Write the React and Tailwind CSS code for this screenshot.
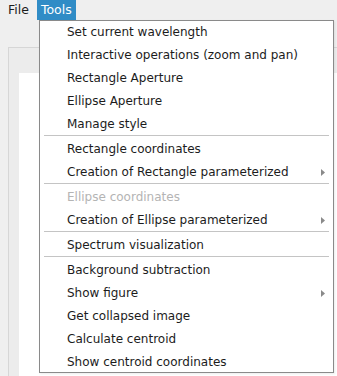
import React from 'react'

const groups = [
  [
    { label: 'Set current wavelength' },
    { label: 'Interactive operations (zoom and pan)' },
    { label: 'Rectangle Aperture' },
    { label: 'Ellipse Aperture' },
    { label: 'Manage style' },
  ],
  [
    { label: 'Rectangle coordinates' },
    { label: 'Creation of Rectangle parameterized', sub: true },
  ],
  [
    { label: 'Ellipse coordinates', disabled: true },
    { label: 'Creation of Ellipse parameterized', sub: true },
  ],
  [{ label: 'Spectrum visualization' }],
  [
    { label: 'Background subtraction' },
    { label: 'Show figure', sub: true },
    { label: 'Get collapsed image' },
    { label: 'Calculate centroid' },
    { label: 'Show centroid coordinates' },
  ],
]

const MenuItem = ({ label, sub, disabled }) => (
  <div className="flex items-center h-[23px] pl-[27px] pr-[7px] pb-[2px]">
    <span className={`flex-1 leading-none ${disabled ? 'text-[#b4b4b4]' : 'text-[#1c1c1c]'}`}>
      {label}
    </span>
    {sub && (
      <svg width="4" height="7" viewBox="0 0 4 7" className="mr-[1px] mt-[1px]">
        <path d="M0 0 L4 3.5 L0 7 Z" fill="#8a8a8a" />
      </svg>
    )}
  </div>
)

const App = () => {
  return (
    <div
      className="relative w-[337px] h-[376px] bg-[#efefef] overflow-hidden text-[12px]"
      style={{ fontFamily: '"DejaVu Sans", sans-serif' }}
    >
      {/* Menu bar */}
      <div className="flex h-[20px] items-stretch text-[#1c1c1c] text-[12.5px]">
        <div className="flex items-center pl-[8px] pr-[7px]">File</div>
        <div className="flex items-center px-[4px] bg-[#308cc6] text-white ml-[1px]">Tools</div>
      </div>

      {/* Window content behind the menu */}
      <div className="ml-[8px] mt-[27px] h-[400px] border-l border-t border-[#d6d6d6] bg-[#ececec] pl-[10px] pt-[25px]">
        <div className="h-full bg-white" />
      </div>

      {/* Tools dropdown */}
      <div className="absolute left-[39px] top-[20px] w-[295px] h-[353px] bg-white border border-[#8a8a8a] shadow-[1px_1px_2px_rgba(0,0,0,0.08)]">
        {groups.map((items, gi) => (
          <div key={gi}>
            {gi > 0 && (
              <div className="h-[2px] px-[4px] -mt-[1px] mb-[1px]">
                <div className="h-px w-full bg-[#c4c4c4]" />
              </div>
            )}
            {items.map((it) => (
              <MenuItem key={it.label} {...it} />
            ))}
          </div>
        ))}
      </div>
    </div>
  )
}

export default App
